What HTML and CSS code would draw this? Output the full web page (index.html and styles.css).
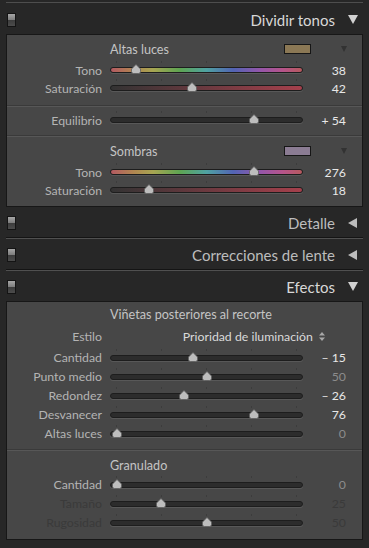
FILE: index.html
```html
<!DOCTYPE html>
<html lang="es">
<head>
  <meta charset="UTF-8">
  <title>Revelar</title>
  <link rel="stylesheet" href="styles.css">
</head>
<body>
  <div class="top-edge"></div>

  <!-- Dividir tonos -->
  <div class="header open">
    <span class="switch"></span>
    <span class="title">Dividir tonos</span>
    <span class="arrow-down"></span>
  </div>
  <div class="content">
    <div class="group">
      <div class="group-head">
        <span class="group-title">Altas luces</span>
        <span class="swatch highlights"></span>
        <span class="mini-arrow"></span>
      </div>
      <div class="row">
        <span class="label">Tono</span>
        <div class="track hue"><span class="thumb" style="left: 13%"><svg width="10" height="10" viewBox="0 0 10 10"><path d="M5 0.5 L9.5 5 L9.5 7.5 Q9.5 9.5 7.5 9.5 L2.5 9.5 Q0.5 9.5 0.5 7.5 L0.5 5 Z"/></svg></span></div>
        <span class="value">38</span>
      </div>
      <div class="row">
        <span class="label">Saturación</span>
        <div class="track sat"><span class="thumb" style="left: 42.5%"><svg width="10" height="10" viewBox="0 0 10 10"><path d="M5 0.5 L9.5 5 L9.5 7.5 Q9.5 9.5 7.5 9.5 L2.5 9.5 Q0.5 9.5 0.5 7.5 L0.5 5 Z"/></svg></span></div>
        <span class="value">42</span>
      </div>
    </div>

    <div class="group single">
      <div class="row">
        <span class="label">Equilibrio</span>
        <div class="track"><span class="thumb" style="left: 75%"><svg width="10" height="10" viewBox="0 0 10 10"><path d="M5 0.5 L9.5 5 L9.5 7.5 Q9.5 9.5 7.5 9.5 L2.5 9.5 Q0.5 9.5 0.5 7.5 L0.5 5 Z"/></svg></span></div>
        <span class="value">+ 54</span>
      </div>
    </div>

    <div class="group last">
      <div class="group-head">
        <span class="group-title">Sombras</span>
        <span class="swatch shadows"></span>
        <span class="mini-arrow"></span>
      </div>
      <div class="row">
        <span class="label">Tono</span>
        <div class="track hue"><span class="thumb" style="left: 75%"><svg width="10" height="10" viewBox="0 0 10 10"><path d="M5 0.5 L9.5 5 L9.5 7.5 Q9.5 9.5 7.5 9.5 L2.5 9.5 Q0.5 9.5 0.5 7.5 L0.5 5 Z"/></svg></span></div>
        <span class="value">276</span>
      </div>
      <div class="row">
        <span class="label">Saturación</span>
        <div class="track sat"><span class="thumb" style="left: 20%"><svg width="10" height="10" viewBox="0 0 10 10"><path d="M5 0.5 L9.5 5 L9.5 7.5 Q9.5 9.5 7.5 9.5 L2.5 9.5 Q0.5 9.5 0.5 7.5 L0.5 5 Z"/></svg></span></div>
        <span class="value">18</span>
      </div>
    </div>
  </div>

  <!-- Detalle -->
  <div class="header">
    <span class="switch"></span>
    <span class="title dim">Detalle</span>
    <span class="arrow-left"></span>
  </div>
  <div class="collapsed"></div>

  <!-- Correcciones de lente -->
  <div class="header">
    <span class="switch"></span>
    <span class="title dim">Correcciones de lente</span>
    <span class="arrow-left"></span>
  </div>
  <div class="collapsed"></div>

  <!-- Efectos -->
  <div class="header open">
    <span class="switch"></span>
    <span class="title">Efectos</span>
    <span class="arrow-down"></span>
  </div>
  <div class="content">
    <div class="group effects">
      <div class="group-head">
        <span class="group-title">Viñetas posteriores al recorte</span>
      </div>
      <div class="row style-row">
        <span class="label">Estilo</span>
        <span class="select">Prioridad de iluminación <svg width="6" height="9" viewBox="0 0 6 9"><path d="M3 0 L6 3.5 L0 3.5 Z M3 9 L6 5.5 L0 5.5 Z"/></svg></span>
      </div>
      <div class="row">
        <span class="label">Cantidad</span>
        <div class="track"><span class="thumb" style="left: 43%"><svg width="10" height="10" viewBox="0 0 10 10"><path d="M5 0.5 L9.5 5 L9.5 7.5 Q9.5 9.5 7.5 9.5 L2.5 9.5 Q0.5 9.5 0.5 7.5 L0.5 5 Z"/></svg></span></div>
        <span class="value">– 15</span>
      </div>
      <div class="row">
        <span class="label">Punto medio</span>
        <div class="track"><span class="thumb" style="left: 50%"><svg width="10" height="10" viewBox="0 0 10 10"><path d="M5 0.5 L9.5 5 L9.5 7.5 Q9.5 9.5 7.5 9.5 L2.5 9.5 Q0.5 9.5 0.5 7.5 L0.5 5 Z"/></svg></span></div>
        <span class="value default">50</span>
      </div>
      <div class="row">
        <span class="label">Redondez</span>
        <div class="track"><span class="thumb" style="left: 38%"><svg width="10" height="10" viewBox="0 0 10 10"><path d="M5 0.5 L9.5 5 L9.5 7.5 Q9.5 9.5 7.5 9.5 L2.5 9.5 Q0.5 9.5 0.5 7.5 L0.5 5 Z"/></svg></span></div>
        <span class="value">– 26</span>
      </div>
      <div class="row">
        <span class="label">Desvanecer</span>
        <div class="track"><span class="thumb" style="left: 75%"><svg width="10" height="10" viewBox="0 0 10 10"><path d="M5 0.5 L9.5 5 L9.5 7.5 Q9.5 9.5 7.5 9.5 L2.5 9.5 Q0.5 9.5 0.5 7.5 L0.5 5 Z"/></svg></span></div>
        <span class="value">76</span>
      </div>
      <div class="row">
        <span class="label">Altas luces</span>
        <div class="track"><span class="thumb" style="left: 3%"><svg width="10" height="10" viewBox="0 0 10 10"><path d="M5 0.5 L9.5 5 L9.5 7.5 Q9.5 9.5 7.5 9.5 L2.5 9.5 Q0.5 9.5 0.5 7.5 L0.5 5 Z"/></svg></span></div>
        <span class="value default">0</span>
      </div>
    </div>

    <div class="group last grain">
      <div class="group-head">
        <span class="group-title">Granulado</span>
      </div>
      <div class="row">
        <span class="label">Cantidad</span>
        <div class="track"><span class="thumb" style="left: 3%"><svg width="10" height="10" viewBox="0 0 10 10"><path d="M5 0.5 L9.5 5 L9.5 7.5 Q9.5 9.5 7.5 9.5 L2.5 9.5 Q0.5 9.5 0.5 7.5 L0.5 5 Z"/></svg></span></div>
        <span class="value default">0</span>
      </div>
      <div class="row disabled">
        <span class="label">Tamaño</span>
        <div class="track"><span class="thumb" style="left: 26%"><svg width="10" height="10" viewBox="0 0 10 10"><path d="M5 0.5 L9.5 5 L9.5 7.5 Q9.5 9.5 7.5 9.5 L2.5 9.5 Q0.5 9.5 0.5 7.5 L0.5 5 Z"/></svg></span></div>
        <span class="value">25</span>
      </div>
      <div class="row disabled">
        <span class="label">Rugosidad</span>
        <div class="track"><span class="thumb" style="left: 50%"><svg width="10" height="10" viewBox="0 0 10 10"><path d="M5 0.5 L9.5 5 L9.5 7.5 Q9.5 9.5 7.5 9.5 L2.5 9.5 Q0.5 9.5 0.5 7.5 L0.5 5 Z"/></svg></span></div>
        <span class="value">50</span>
      </div>
    </div>
  </div>

  <div class="header">
    <span class="switch"></span>
  </div>
</body>
</html>
```

FILE: styles.css
```css
body {
  margin: 0;
  width: 369px;
  height: 548px;
  overflow: hidden;
  background-color: #272727;
  font-family: Lato, "Noto Sans", sans-serif;
  color: #b4b4b4;
}

.top-edge {
  height: 4px;
  padding: 0 6px;
  box-sizing: border-box;
}

.top-edge::after {
  content: '';
  display: block;
  height: 2px;
  border-bottom: 1px solid #4e4e4e;
}

/* panel headers */
.header {
  height: 30px;
  display: flex;
  align-items: center;
  padding: 1px 11px 0 7px;
  box-sizing: border-box;
}

.switch {
  width: 7px;
  height: 12px;
  border: 1px solid #141414;
  background: linear-gradient(#a6a6a6 0, #7c7c7c 50%, #3c3c3c 50%, #4c4c4c 100%);
}

.title {
  margin-left: auto;
  margin-right: 13px;
  font-size: 15px;
  color: #d8d8d8;
}

.title.dim {
  color: #bdbdbd;
}

.arrow-down {
  width: 0;
  height: 0;
  border-left: 5px solid transparent;
  border-right: 5px solid transparent;
  border-top: 9px solid #d2d2d2;
}

.arrow-left {
  width: 0;
  height: 0;
  margin-right: 1px;
  border-top: 5px solid transparent;
  border-bottom: 5px solid transparent;
  border-right: 9px solid #bcbcbc;
}

.collapsed {
  height: 2px;
  margin: 0 6px;
  border-top: 1px solid #141414;
  border-bottom: 1px solid #505050;
  box-sizing: border-box;
}

/* panel content */
.content {
  margin: 0 6px;
  background-color: #474747;
  border: 1px solid #171717;
}

.group {
  padding: 5px 0 8px;
  border-bottom: 1px solid #3a3a3a;
  box-shadow: 0 1px 0 #575757;
  margin-bottom: 1px;
}

.group.single {
  padding: 4px 0 6px;
}

.group.last {
  border-bottom: none;
  box-shadow: none;
  margin-bottom: 0;
  padding-bottom: 7px;
}

.group.effects {
  padding: 3px 0 6px;
}

.group.grain {
  padding-top: 5px;
}

.group-head {
  height: 18px;
  display: flex;
  align-items: center;
  padding: 0 15px 0 103px;
  margin-bottom: 3px;
}

.grain .group-head {
  margin-bottom: 1px;
}

.group-title {
  font-size: 12.6px;
  color: #c4c4c4;
}

.swatch {
  margin-left: auto;
  width: 25px;
  height: 8px;
  border: 1px solid #161616;
}

.swatch.highlights {
  background-color: #8b7855;
}

.swatch.shadows {
  background-color: #8b7c93;
}

.mini-arrow {
  margin-left: 30px;
  width: 0;
  height: 0;
  border-left: 3.5px solid transparent;
  border-right: 3.5px solid transparent;
  border-top: 6px solid #323232;
}

/* slider rows */
.row {
  display: grid;
  grid-template-columns: 103px 193px 43px;
  align-items: center;
  height: 18px;
  font-size: 12.3px;
}

.effects .row,
.grain .row {
  height: 19px;
}

.effects .style-row {
  height: 20px;
  margin-bottom: 2px;
}

.label {
  text-align: right;
  padding-right: 8px;
}

.value {
  text-align: right;
  color: #e8e8e8;
}

.value.default {
  color: #8c8c8c;
}

.row.disabled .label,
.row.disabled .value {
  color: #3a3a3a;
}

.select {
  grid-column: 2 / 4;
  text-align: right;
  padding-right: 21px;
  color: #dadada;
}

.select svg {
  fill: #a8a8a8;
  margin-left: 3px;
}

.track {
  position: relative;
  height: 4px;
  background-color: #2c2c2c;
  border: 1px solid #1d1d1d;
  border-radius: 3px;
  box-shadow: 0 1px 0 #585858;
}

.track::before {
  content: '';
  position: absolute;
  left: 5px;
  right: 5px;
  top: -7px;
  height: 2px;
  background:
    linear-gradient(#3c3c3c, #3c3c3c) 0 0 / 1px 2px no-repeat,
    linear-gradient(#3c3c3c, #3c3c3c) 25% 0 / 1px 2px no-repeat,
    linear-gradient(#3c3c3c, #3c3c3c) 50% 0 / 1px 2px no-repeat,
    linear-gradient(#3c3c3c, #3c3c3c) 75% 0 / 1px 2px no-repeat,
    linear-gradient(#3c3c3c, #3c3c3c) 100% 0 / 1px 2px no-repeat;
}

.track.hue {
  background: linear-gradient(to right, #b35a62, #b08650 12%, #a7a552 22%, #5ea552 36%, #4fa2a2 50%, #5264b4 64%, #9456aa 78%, #b5548a 90%, #b65a5e);
}

.track.sat {
  background: linear-gradient(to right, #333333, #a5404c);
}

.thumb {
  position: absolute;
  top: 50%;
  width: 10px;
  height: 10px;
  margin: -6px 0 0 -5px;
}

.thumb svg {
  display: block;
  fill: #bdbdbd;
  stroke: #5e5e5e;
  stroke-width: 0.8;
}
```
